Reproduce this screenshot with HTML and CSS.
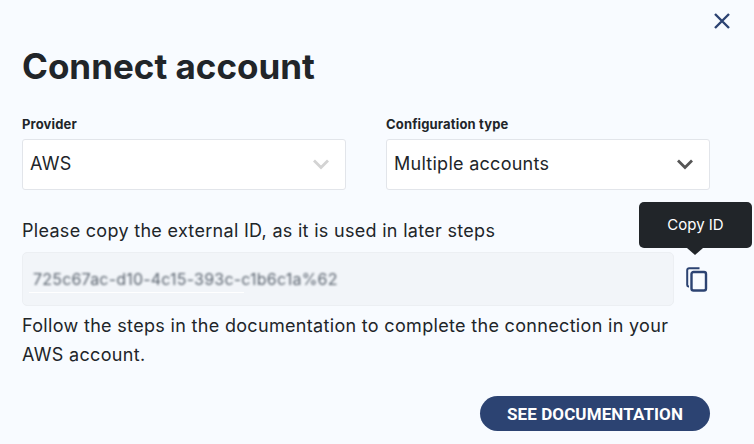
FILE: index.html
```html
<!DOCTYPE html>
<html lang="en">
<head>
    <meta charset="UTF-8">
    <title>Connect account</title>
    <link rel="stylesheet" href="styles.css">
</head>
<body>
    <div class="modal">
        <button class="close-button" aria-label="Close">
            <svg width="18" height="18" viewBox="0 0 18 18"><path d="M2 2L16 16M16 2L2 16" fill="none" stroke="#2c4372" stroke-width="2.4"/></svg>
        </button>

        <h1>Connect account</h1>

        <div class="fields">
            <div class="field">
                <label>Provider</label>
                <div class="select">
                    <span>AWS</span>
                    <svg width="18" height="12" viewBox="0 0 18 12"><path d="M2 2.5L9 9.5L16 2.5" fill="none" stroke="#d3d3d3" stroke-width="2.8"/></svg>
                </div>
            </div>
            <div class="field">
                <label>Configuration type</label>
                <div class="select">
                    <span>Multiple accounts</span>
                    <svg width="18" height="12" viewBox="0 0 18 12"><path d="M2 2.5L9 9.5L16 2.5" fill="none" stroke="#555555" stroke-width="2.8"/></svg>
                </div>
            </div>
        </div>

        <p class="copy-text">Please copy the external ID, as it is used in later steps</p>

        <div class="id-row">
            <div class="id-box"><span class="id-value">725c67ac-d10-4c15-393c-c1b6c1a%62</span></div>
            <div class="copy-wrap">
                <div class="tooltip">Copy ID</div>
                <svg width="22" height="25" viewBox="0 0 22 25">
                    <path d="M3 19.5H2.5A1.5 1.5 0 0 1 1.2 18V3A2 2 0 0 1 3.2 1.2H13.5" fill="none" stroke="#2c4372" stroke-width="2"/>
                    <rect x="5.5" y="5" width="14.5" height="18.5" rx="2" fill="none" stroke="#2c4372" stroke-width="2.4"/>
                </svg>
            </div>
        </div>

        <p class="steps-text">Follow the steps in the documentation to complete the connection in your AWS account.</p>

        <div class="actions">
            <button class="doc-button">SEE DOCUMENTATION</button>
        </div>
    </div>
</body>
</html>
```

FILE: styles.css
```css
* {
    box-sizing: border-box;
    margin: 0;
    padding: 0;
}

body {
    width: 754px;
    height: 444px;
    overflow: hidden;
    background-color: #f8fbff;
    font-family: "Inter", sans-serif;
    color: #212529;
}

.modal {
    position: relative;
    height: 444px;
    padding: 45px 44px 0 22px;
}

.close-button {
    position: absolute;
    top: 12px;
    right: 23px;
    display: flex;
    border: none;
    background: none;
}

h1 {
    font-size: 35px;
    line-height: 42px;
    font-weight: 700;
}

/* Two selects in one row */
.fields {
    display: flex;
    gap: 40px;
    margin-top: 29px;
}

.field {
    width: 324px;
}

label {
    display: block;
    font-size: 13px;
    line-height: 16px;
    font-weight: 700;
    letter-spacing: 0.15px;
    margin-bottom: 7px;
}

.select {
    display: flex;
    justify-content: space-between;
    align-items: center;
    height: 51px;
    padding: 0 15px 2px 7px;
    background-color: #ffffff;
    border: 1px solid #e2e5ea;
    border-radius: 3px;
    font-size: 18px;
    letter-spacing: 0.27px;
}

.copy-text {
    font-size: 18px;
    line-height: 24px;
    letter-spacing: 0.3px;
    margin-top: 29px;
}

.id-row {
    display: flex;
    align-items: center;
    margin-top: 9px;
}

.id-box {
    position: relative;
    width: 652px;
    height: 54px;
    display: flex;
    align-items: center;
    padding-left: 10px;
    background-color: #f2f5f9;
    border: 1px solid #eceff3;
    border-radius: 5px;
}

.id-box::after {
    content: "";
    position: absolute;
    left: 6px;
    top: 39px;
    width: 215px;
    height: 1px;
    background-color: #ffffff;
}

.id-value {
    font-size: 16px;
    letter-spacing: 0.2px;
    color: #5c6570;
    filter: blur(1px);
}

.copy-wrap {
    position: relative;
    display: flex;
    margin-left: 12px;
}

.tooltip {
    position: absolute;
    left: -47px;
    top: -65px;
    width: 113px;
    height: 46px;
    display: flex;
    align-items: center;
    justify-content: center;
    background-color: #212529;
    color: #ffffff;
    border-radius: 5px;
    font-size: 15px;
}

.tooltip::after {
    content: "";
    position: absolute;
    left: 48px;
    bottom: -7px;
    border-left: 8px solid transparent;
    border-right: 8px solid transparent;
    border-top: 7px solid #212529;
}

.steps-text {
    font-size: 18px;
    line-height: 29px;
    letter-spacing: 0.32px;
    margin-top: 5px;
}

.actions {
    display: flex;
    justify-content: flex-end;
    margin-top: 27px;
}

.doc-button {
    width: 230px;
    height: 35px;
    border: none;
    border-radius: 18px;
    background-color: #2c4372;
    color: #ffffff;
    font-family: "Roboto", sans-serif;
    font-size: 17px;
    font-weight: 700;
    letter-spacing: 0.1px;
}
```
